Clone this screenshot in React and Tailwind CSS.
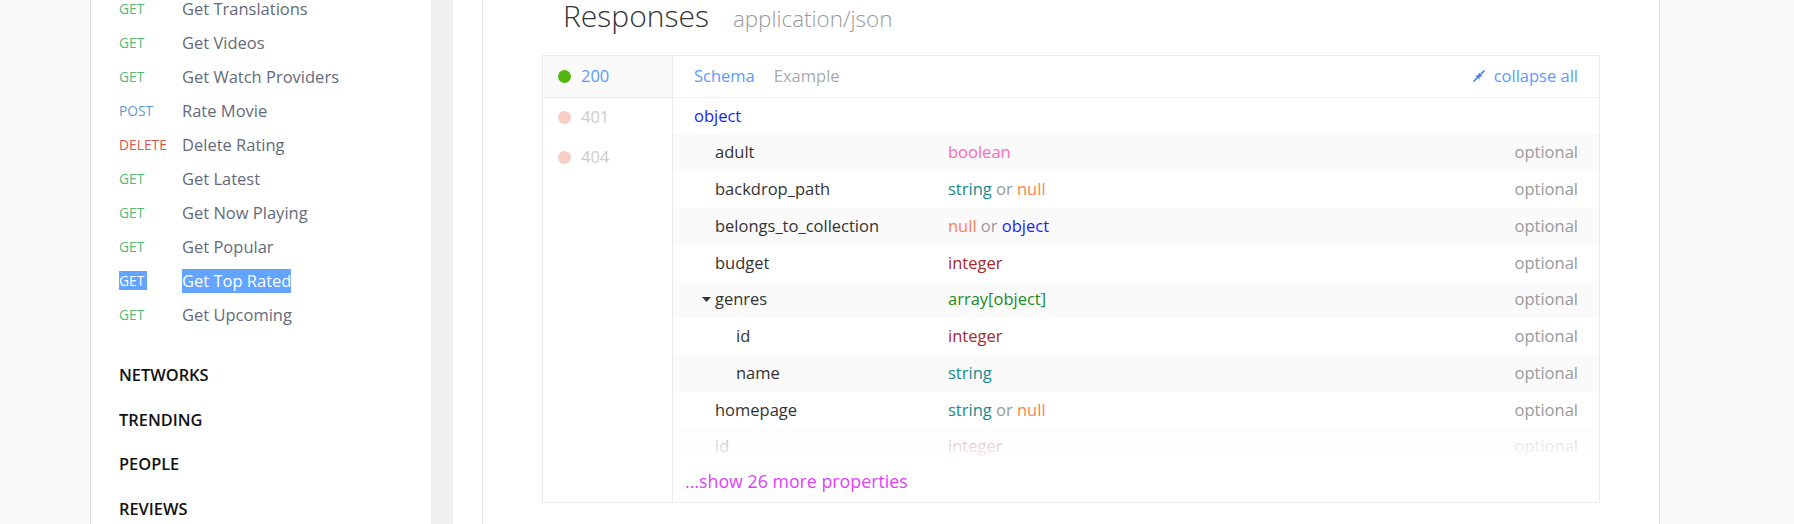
import React from 'react';

const endpoints = [
  { method: 'GET', name: 'Get Translations' },
  { method: 'GET', name: 'Get Videos' },
  { method: 'GET', name: 'Get Watch Providers' },
  { method: 'POST', name: 'Rate Movie' },
  { method: 'DELETE', name: 'Delete Rating' },
  { method: 'GET', name: 'Get Latest' },
  { method: 'GET', name: 'Get Now Playing' },
  { method: 'GET', name: 'Get Popular' },
  { method: 'GET', name: 'Get Top Rated', selected: true },
  { method: 'GET', name: 'Get Upcoming' },
];

const sections = ['NETWORKS', 'TRENDING', 'PEOPLE', 'REVIEWS'];

const methodColors = {
  GET: 'text-[#4fbb7c]',
  POST: 'text-[#5b9ad8]',
  DELETE: 'text-[#d9574f]',
};

const typeColors = {
  boolean: 'text-[#ff69b4]',
  string: 'text-[#178a8a]',
  null: 'text-[#ff7f50]',
  object: 'text-[#1a1aff]',
  integer: 'text-[#a52a2a]',
  'array[object]': 'text-[#228b22]',
};

const props = [
  { name: 'adult', types: ['boolean'] },
  { name: 'backdrop_path', types: ['string', 'null'] },
  { name: 'belongs_to_collection', types: ['null', 'object'] },
  { name: 'budget', types: ['integer'] },
  { name: 'genres', types: ['array[object]'], expanded: true },
  { name: 'id', types: ['integer'], nested: true },
  { name: 'name', types: ['string'], nested: true },
  { name: 'homepage', types: ['string', 'null'] },
  { name: 'id', types: ['integer'], faded: true },
];

function CollapseIcon() {
  return (
    <svg width="12" height="12" viewBox="0 0 12 12" className="shrink-0">
      <path d="M11.6 0.4 L7.6 4.4" stroke="#4f8ff5" strokeWidth="1.8" />
      <polygon points="5.4,6.6 5.6,2.4 9.6,6.4" fill="#3d6fe0" />
      <path d="M0.4 11.6 L4.4 7.6" stroke="#4f8ff5" strokeWidth="1.8" />
      <polygon points="6.6,5.4 6.4,9.6 2.4,5.6" fill="#3d6fe0" />
    </svg>
  );
}

function Sidebar() {
  return (
    <aside className="w-[340px] shrink-0 bg-white pl-[28px]">
      <div className="-mt-2">
        {endpoints.map((ep) => (
          <div key={ep.name} className="flex h-[34px] items-center">
            <div className="w-[63px] shrink-0 text-[13.8px]">
              <span className={ep.selected ? 'bg-[#62a4ff] pr-[3px] text-white' : methodColors[ep.method]}>
                {ep.method}
              </span>
            </div>
            <span className={`text-[16.5px] ${ep.selected ? 'bg-[#62a4ff] text-white' : 'text-[#636b7a]'}`}>
              {ep.name}
            </span>
          </div>
        ))}
      </div>
      <div className="mt-[21px]">
        {sections.map((s) => (
          <div key={s} className="flex h-[44.7px] items-center text-[16.4px] font-semibold text-[#111]">
            {s}
          </div>
        ))}
      </div>
    </aside>
  );
}

function PropRow({ prop, shaded }) {
  const indent = prop.nested ? 'pl-[63px]' : 'pl-[42px]';
  return (
    <div className={`relative flex h-[36.75px] items-center text-[16.5px] ${shaded ? 'bg-[#fafafa]' : 'bg-white'}`}>
      <div className={`relative flex w-[275px] shrink-0 items-center text-[#333] ${indent}`}>
        {prop.expanded && (
          <svg width="9" height="5" viewBox="0 0 9 5" className="absolute left-[29px] top-[10px]">
            <polygon points="0,0 9,0 4.5,5" fill="#333" />
          </svg>
        )}
        {prop.name}
      </div>
      <div className="flex-1">
        {prop.types.map((t, i) => (
          <span key={t}>
            {i > 0 && <span className="text-[#999]"> or </span>}
            <span className={typeColors[t]}>{t}</span>
          </span>
        ))}
      </div>
      <div className="pr-[21px] text-[#999]">optional</div>
      {prop.faded && (
        <div className="absolute inset-0 bg-linear-to-b from-white/50 via-white/80 to-white" />
      )}
    </div>
  );
}

function Responses() {
  return (
    <main className="w-[1178px] shrink-0 border-x border-[#e3e3e3] bg-white px-[59px]">
      <div className="-mt-[2px] flex items-baseline pl-[21px]">
        <h2 className="text-[30px] font-light leading-[36px] text-[#333]">Responses</h2>
        <span className="ml-[24px] text-[22.4px] font-light text-[#999]">application/json</span>
      </div>
      <div className="mt-[19px] flex h-[448px] border border-[#ececec]">
        <div className="w-[130px] shrink-0 border-r border-[#ececec]">
          <div className="flex h-[42px] items-center border-b border-[#f0f0f0] bg-[#fafafa] pl-[15px] text-[16.5px]">
            <span className="mr-[10px] h-[13px] w-[13px] rounded-full bg-[#52b512]" />
            <span className="text-[#5a9bff]">200</span>
          </div>
          {['401', '404'].map((c) => (
            <div key={c} className="flex h-[40px] items-center pl-[15px] text-[16.5px]">
              <span className="mr-[10px] h-[13px] w-[13px] rounded-full bg-[#f8cdc6]" />
              <span className="text-[#cccccc]">{c}</span>
            </div>
          ))}
        </div>
        <div className="flex-1">
          <div className="flex h-[42px] items-center border-b border-[#f0f0f0] px-[21px] text-[16.5px]">
            <span className="text-[#5a9bff]">Schema</span>
            <span className="ml-[19px] text-[#aaa]">Example</span>
            <div className="ml-auto flex items-center gap-[9px] text-[#5a9bff]">
              <CollapseIcon />
              collapse all
            </div>
          </div>
          <div className="flex h-[36.75px] items-center pl-[21px] text-[16.5px] text-[#1a1aff]">object</div>
          {props.map((p, i) => (
            <PropRow key={i} prop={p} shaded={i % 2 === 0} />
          ))}
          <div className="flex h-[33px] items-center pl-[12px] text-[17.8px] text-[#e040fb]">
            ...show 26 more properties
          </div>
        </div>
      </div>
    </main>
  );
}

export default function App() {
  return (
    <div className="flex h-[524px] w-[1794px] overflow-hidden bg-[#f9f9f9] font-['Open_Sans',sans-serif]">
      <div className="w-[91px] shrink-0 border-r border-[#e0e0e0] bg-[#f9f9f9]" />
      <Sidebar />
      <div className="w-[22px] shrink-0 bg-[#f0f0f0]" />
      <div className="w-[29px] shrink-0 bg-white" />
      <Responses />
      <div className="flex-1 bg-[#f9f9f9]" />
    </div>
  );
}
